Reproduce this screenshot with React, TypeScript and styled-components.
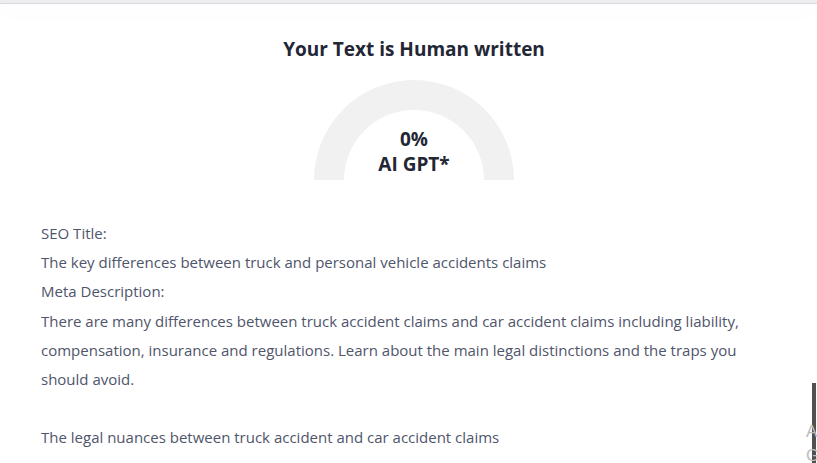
import React from 'react';
import styled, {createGlobalStyle} from 'styled-components';

const GlobalStyle = createGlobalStyle`
    html, body {
        margin: 0;
        padding: 0;
        background: #ffffff;
    }
    body {
        font-family: "Open Sans", "Noto Sans", sans-serif;
        overflow: hidden;
    }
`;

const Page = styled.div`
    position: relative;
    width: 817px;
    height: 463px;
    overflow: hidden;
    background: #fff;
`;

const TopEdge = styled.div`
    height: 3px;
    background: #eeeef0;
    border-bottom: 1px solid #d8d8db;
    box-shadow: 0 6px 22px rgba(0, 0, 0, 0.05);
`;

const Result = styled.section`
    padding: 0 30px 0 41px;
    display: flex;
    flex-direction: column;
    align-items: center;
`;

const Heading = styled.h2`
    margin: 32px 0 0;
    font-size: 19px;
    line-height: 26px;
    font-weight: 700;
    color: #232634;
`;

const Gauge = styled.div`
    margin-top: 18px;
    width: 200px;
    height: 100px;
    border-radius: 100px 100px 0 0;
    background: #f1f1f1;
    display: flex;
    align-items: flex-end;
    justify-content: center;
`;

const GaugeHole = styled.div`
    width: 140px;
    height: 70px;
    border-radius: 70px 70px 0 0;
    background: #fff;
    display: flex;
    flex-direction: column;
    align-items: center;
    justify-content: flex-end;
    padding-bottom: 3px;
    box-sizing: border-box;
`;

const GaugeLabel = styled.div`
    font-size: 19px;
    line-height: 25px;
    font-weight: 700;
    color: #232634;
`;

const Body = styled.div`
    margin-top: 39px;
    padding: 0 30px 0 41px;
    font-size: 15px;
    line-height: 29.2px;
    color: #4f556b;
`;

const Line = styled.p`
    margin: 0;
`;

const Gap = styled.div`
    height: 29px;
`;

const SideTab = styled.div`
    position: absolute;
    right: 0;
    top: 383px;
    width: 12px;
    height: 80px;
`;

const SideStrip = styled.div`
    position: absolute;
    right: 1px;
    top: 0;
    bottom: 0;
    width: 4px;
    background: #505050;
`;

const SideGlyph = styled.span`
    position: absolute;
    left: 1px;
    font-size: 17px;
    line-height: 18px;
    color: #bdbdbd;
    font-family: "Liberation Sans", sans-serif;
`;

const App = () => {
    return (
        <Page>
            <GlobalStyle />
            <TopEdge />
            <Result>
                <Heading>Your Text is Human written</Heading>
                <Gauge>
                    <GaugeHole>
                        <GaugeLabel>0%</GaugeLabel>
                        <GaugeLabel>AI GPT*</GaugeLabel>
                    </GaugeHole>
                </Gauge>
            </Result>
            <Body>
                <Line>SEO Title:</Line>
                <Line>The key differences between truck and personal vehicle accidents claims</Line>
                <Line>Meta Description:</Line>
                <Line>
                    There are many differences between truck accident claims and car accident claims including liability,
                    compensation, insurance and regulations. Learn about the main legal distinctions and the traps you
                    should avoid.
                </Line>
                <Gap />
                <Line>The legal nuances between truck accident and car accident claims</Line>
            </Body>
            <SideTab>
                <SideStrip />
                <SideGlyph style={{top: 40}}>A</SideGlyph>
                <SideGlyph style={{top: 64}}>G</SideGlyph>
            </SideTab>
        </Page>
    );
};

export default App;
